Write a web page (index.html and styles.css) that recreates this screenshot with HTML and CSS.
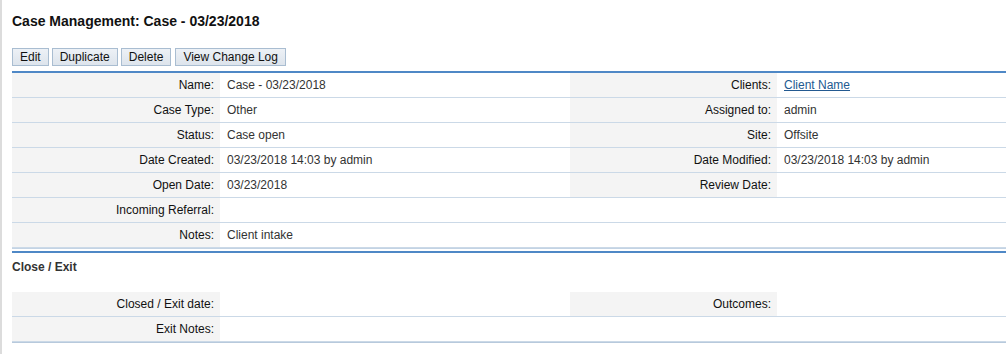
FILE: index.html
```html
<!DOCTYPE html>
<html lang="en">

<head>
    <meta charset="UTF-8">
    <title>Case Management: Case - 03/23/2018</title>
    <link rel="stylesheet" href="styles.css">
</head>

<body>
    <div class="page">
        <h1>Case Management: Case - 03/23/2018</h1>

        <div class="actions">
            <button>Edit</button>
            <button>Duplicate</button>
            <button>Delete</button>
            <button>View Change Log</button>
        </div>

        <div class="record">
            <div class="row">
                <div class="label">Name:</div>
                <div class="value">Case - 03/23/2018</div>
                <div class="label">Clients:</div>
                <div class="value"><a href="#">Client Name</a></div>
            </div>
            <div class="row">
                <div class="label">Case Type:</div>
                <div class="value">Other</div>
                <div class="label">Assigned to:</div>
                <div class="value">admin</div>
            </div>
            <div class="row">
                <div class="label">Status:</div>
                <div class="value">Case open</div>
                <div class="label">Site:</div>
                <div class="value">Offsite</div>
            </div>
            <div class="row">
                <div class="label">Date Created:</div>
                <div class="value">03/23/2018 14:03 by admin</div>
                <div class="label">Date Modified:</div>
                <div class="value">03/23/2018 14:03 by admin</div>
            </div>
            <div class="row">
                <div class="label">Open Date:</div>
                <div class="value">03/23/2018</div>
                <div class="label">Review Date:</div>
                <div class="value"></div>
            </div>
            <div class="row">
                <div class="label">Incoming Referral:</div>
                <div class="value"></div>
                <div class="blank"></div>
                <div class="blank"></div>
            </div>
            <div class="row">
                <div class="label">Notes:</div>
                <div class="value">Client intake</div>
                <div class="blank"></div>
                <div class="blank"></div>
            </div>
        </div>

        <h2>Close / Exit</h2>

        <div class="record closing">
            <div class="row">
                <div class="label">Closed / Exit date:</div>
                <div class="value"></div>
                <div class="label">Outcomes:</div>
                <div class="value"></div>
            </div>
            <div class="row">
                <div class="label">Exit Notes:</div>
                <div class="value"></div>
                <div class="blank"></div>
                <div class="blank"></div>
            </div>
        </div>
    </div>
</body>

</html>
```

FILE: styles.css
```css
body {
    margin: 0;
    background-color: #fff;
    font-family: "Liberation Sans", Arial, sans-serif;
    font-size: 12px;
    color: #222;
}

.page {
    border-left: 2px solid #dcdcdc;
    padding: 13px 0 12px 10px;
    min-height: 329px;
}

h1 {
    margin: 0;
    font-size: 14px;
    line-height: 16px;
    color: #111;
}

.actions {
    display: flex;
    gap: 3px;
    margin-top: 19px;
}

.actions button {
    font-family: "Liberation Sans", Arial, sans-serif;
    font-size: 12px;
    line-height: 16px;
    padding: 0 7px;
    color: #111;
    background: linear-gradient(#edf1f6, #dde4ec);
    border: 1px solid #a9bdd1;
    border-radius: 0;
}

.actions button:last-child {
    margin-left: 1px;
}

.record {
    margin-top: 5px;
    border-top: 2px solid #4f88c6;
    border-bottom: 1px solid #c3d3e4;
}

.row {
    display: grid;
    grid-template-columns: 208px 350px 207px 1fr;
    border-bottom: 1px solid #cbd9e7;
}

.label,
.value,
.blank {
    height: 24px;
    line-height: 24px;
    white-space: nowrap;
}

.label {
    background-color: #f4f4f4;
    text-align: right;
    padding-right: 6px;
    color: #111;
}

.value {
    padding-left: 7px;
    color: #333;
}

.value a {
    color: #235a91;
}

h2 {
    margin: 2px 0 0;
    padding: 7px 0 18px;
    border-top: 2px solid #4f88c6;
    font-size: 12px;
    line-height: 14px;
    color: #333;
}

.closing {
    margin-top: 0;
    border-top: none;
    border-bottom: 1px solid #b7c9dc;
}
```
